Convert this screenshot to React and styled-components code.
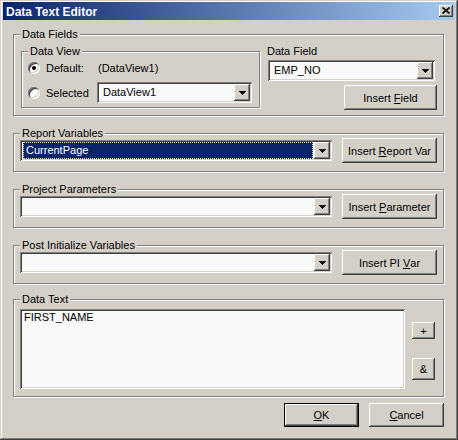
import React from 'react';
import styled, { createGlobalStyle, css } from 'styled-components';

const GlobalStyle = createGlobalStyle`
  html, body { margin: 0; padding: 0; background: #D4D0C8; }
  body { font-family: "Liberation Sans", Arial, sans-serif; font-size: 11px; color: #000; }
  * { box-sizing: border-box; }
`;

const raised = `inset -1px -1px 0 #404040, inset 1px 1px 0 #ffffff, inset -2px -2px 0 #808080, inset 2px 2px 0 #D4D0C8`;
const sunken = `inset 1px 1px 0 #808080, inset -1px -1px 0 #ffffff, inset 2px 2px 0 #404040, inset -2px -2px 0 #D4D0C8`;

const Window = styled.div`
  width: 458px;
  height: 440px;
  background: #D4D0C8;
  padding: 2px 3px 3px 3px;
  box-shadow: inset -1px -1px 0 #404040, inset 1px 1px 0 #D4D0C8, inset -2px -2px 0 #808080, inset 2px 2px 0 #ffffff;
  display: flex;
  flex-direction: column;
`;

const TitleBar = styled.div`
  height: 18px;
  flex: none;
  background: linear-gradient(to right, #0A246A, #A6CAF0);
  display: flex;
  align-items: center;
  justify-content: space-between;
  padding: 0 2px 0 3px;
`;

const TitleText = styled.span`
  color: #fff;
  font-weight: bold;
  font-size: 12px;
  line-height: 14px;
  padding-top: 1px;
`;

const CloseButton = styled.div`
  width: 14px;
  height: 12px;
  background: #D4D0C8;
  box-shadow: ${raised};
  display: flex;
  align-items: center;
  justify-content: center;
  padding-bottom: 1px;
`;

const Content = styled.div`
  display: flex;
  flex-direction: column;
  padding: 14px 11px 0 10px;
`;

const Stack = styled.div`
  display: flex;
  flex-direction: column;
  gap: 17px;
`;

const Group = styled.div`
  position: relative;
  flex: none;
  border: 1px solid #808080;
  box-shadow: 1px 1px 0 #ffffff, inset 1px 1px 0 #ffffff;
  height: ${(p) => p.$h}px;
  width: ${(p) => (p.$w ? `${p.$w}px` : 'auto')};
  padding: ${(p) => p.$pad};
  margin-top: ${(p) => p.$mt || 0}px;
  ${(p) => p.$flex && css`
    display: flex;
    gap: 7px;
    align-items: flex-start;
  `}
`;

const Legend = styled.span`
  position: absolute;
  top: -8px;
  left: 6px;
  padding: 0 2px;
  background: #D4D0C8;
  line-height: 14px;
  white-space: nowrap;
`;

const RadioGrid = styled.div`
  display: grid;
  grid-template-columns: 12px 57px 155px;
  grid-template-rows: 20px 21px;
  row-gap: 4px;
  align-items: center;
`;

const Radio = styled.span`
  width: 12px;
  height: 12px;
  border-radius: 50%;
  background: #fff;
  box-shadow: ${sunken};
  display: flex;
  align-items: center;
  justify-content: center;
  &::after {
    content: '';
    width: 4px;
    height: 4px;
    border-radius: 50%;
    background: #000;
    display: ${(p) => (p.$checked ? 'block' : 'none')};
  }
`;

const RadioLabel = styled.span`
  padding-left: 6px;
  white-space: nowrap;
`;

const Plain = styled.span`
  padding-left: 1px;
  white-space: nowrap;
`;

const FieldColumn = styled.div`
  flex: 1;
  display: flex;
  flex-direction: column;
`;

const FieldLabel = styled.span`
  line-height: 13px;
  height: 13px;
`;

const Combo = styled.div`
  flex: none;
  display: flex;
  height: 21px;
  width: ${(p) => p.$w}px;
  margin: ${(p) => p.$m || '0'};
  background: #F9F9F9;
  padding: 2px;
  box-shadow: ${sunken};
`;

const ComboValue = styled.div`
  flex: 1;
  margin: 0 1px;
  padding-left: 3px;
  line-height: 17px;
  white-space: nowrap;
  overflow: hidden;
  ${(p) => p.$selected && css`
    background: #0A246A;
    color: #fff;
    outline: 1px dotted #F5DB95;
    outline-offset: -1px;
  `}
`;

const DropButton = styled.div`
  width: 16px;
  height: 17px;
  flex: none;
  background: #D4D0C8;
  box-shadow: ${raised};
  display: flex;
  align-items: center;
  justify-content: center;
`;

const Row = styled.div`
  display: flex;
  align-items: center;
  justify-content: space-between;
  height: 25px;
`;

const Button = styled.button`
  flex: none;
  font: inherit;
  color: #000;
  padding: 0;
  margin: ${(p) => p.$m || '0'};
  border: none;
  width: ${(p) => p.$w}px;
  height: ${(p) => p.$h || 25}px;
  background: #D4D0C8;
  box-shadow: ${raised};
  display: flex;
  align-items: center;
  justify-content: center;
  align-self: ${(p) => p.$self || 'auto'};
  white-space: nowrap;
  ${(p) => p.$default && css`border: 1px solid #000;`}
`;

const TextRow = styled.div`
  display: flex;
  gap: 7px;
`;

const TextArea = styled.div`
  width: 385px;
  height: 80px;
  background: #F9F9F9;
  box-shadow: ${sunken};
  padding: 2px 4px;
  line-height: 13px;
`;

const SideButtons = styled.div`
  display: flex;
  flex-direction: column;
  width: 23px;
`;

const Footer = styled.div`
  display: flex;
  justify-content: flex-end;
  gap: 10px;
  margin-top: 6px;
`;

const Arrow = () => (
  <svg width="7" height="4" viewBox="0 0 7 4" shapeRendering="crispEdges">
    <rect x="0" y="0" width="7" height="1" fill="#000" />
    <rect x="1" y="1" width="5" height="1" fill="#000" />
    <rect x="2" y="2" width="3" height="1" fill="#000" />
    <rect x="3" y="3" width="1" height="1" fill="#000" />
  </svg>
);

const CloseGlyph = () => (
  <svg width="8" height="7" viewBox="0 0 8 7">
    <path d="M0.5 0.5 L7.5 6.5 M7.5 0.5 L0.5 6.5" stroke="#000" strokeWidth="1.6" />
  </svg>
);

const ComboBox = ({ value, w, m, selected }) => (
  <Combo $w={w} $m={m}>
    <ComboValue $selected={selected}>{value}</ComboValue>
    <DropButton>
      <Arrow />
    </DropButton>
  </Combo>
);

const VarGroup = ({ title, value, selected, children }) => (
  <Group $h={39} $pad="4px 6px 0 6px">
    <Legend>{title}</Legend>
    <Row>
      <ComboBox value={value} w={312} selected={selected} />
      <Button $w={95}>{children}</Button>
    </Row>
  </Group>
);

export default function App() {
  return (
    <>
      <GlobalStyle />
      <Window>
        <TitleBar>
          <TitleText>Data Text Editor</TitleText>
          <CloseButton>
            <CloseGlyph />
          </CloseButton>
        </TitleBar>
        <Content>
          <Stack>
            <Group $h={82} $pad="10px 6px 0 7px" $flex>
              <Legend>Data Fields</Legend>
              <Group $w={239} $h={57} $mt={6} $pad="6px 7px 0 6px">
                <Legend>Data View</Legend>
                <RadioGrid>
                  <Radio $checked />
                  <RadioLabel>Default:</RadioLabel>
                  <Plain>(DataView1)</Plain>
                  <Radio />
                  <RadioLabel>Selected</RadioLabel>
                  <ComboBox value="DataView1" w={155} />
                </RadioGrid>
              </Group>
              <FieldColumn>
                <FieldLabel>Data Field</FieldLabel>
                <ComboBox value="EMP_NO" w={167} m="2px 0 0 1px" />
                <Button $w={93} $m="4px 0 0 0" $self="flex-end">
                  Insert&nbsp;<u>F</u>ield
                </Button>
              </FieldColumn>
            </Group>

            <VarGroup title="Report Variables" value="CurrentPage" selected>
              Insert&nbsp;<u>R</u>eport Var
            </VarGroup>
            <VarGroup title="Project Parameters" value="">
              Insert&nbsp;<u>P</u>arameter
            </VarGroup>
            <VarGroup title="Post Initialize Variables" value="">
              Insert PI&nbsp;<u>V</u>ar
            </VarGroup>

            <Group $h={98} $mt={-2} $pad="9px 6px 0 6px">
              <Legend>Data Text</Legend>
              <TextRow>
                <TextArea>FIRST_NAME</TextArea>
                <SideButtons>
                  <Button $w={23} $h={17} $m="13px 0 0 0">+</Button>
                  <Button $w={23} $h={22} $m="19px 0 0 0">&amp;</Button>
                </SideButtons>
              </TextRow>
            </Group>
          </Stack>
          <Footer>
            <Button $w={75} $h={24} $default>
              <u>O</u>K
            </Button>
            <Button $w={75} $h={24}>
              <u>C</u>ancel
            </Button>
          </Footer>
        </Content>
      </Window>
    </>
  );
}
